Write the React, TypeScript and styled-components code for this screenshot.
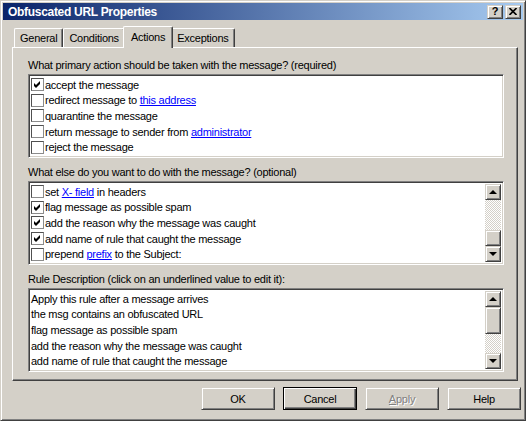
import React from "react";
import styled, { createGlobalStyle, css } from "styled-components";

const GlobalStyle = createGlobalStyle`
  html, body {
    margin: 0;
    padding: 0;
    background: #d4d0c8;
    overflow: hidden;
  }
  body {
    font-family: "Liberation Sans", Arial, sans-serif;
    font-size: 11px;
    letter-spacing: -0.25px;
    color: #000;
  }
`;

const raised = css`
  border: 1px solid;
  border-color: #d4d0c8 #404040 #404040 #d4d0c8;
  box-shadow: inset 1px 1px #fff, inset -1px -1px #808080;
`;

const sunken = css`
  border: 1px solid;
  border-color: #808080 #fff #fff #808080;
  box-shadow: inset 1px 1px #404040, inset -1px -1px #d4d0c8;
`;

const Window = styled.div`
  box-sizing: border-box;
  width: 526px;
  height: 421px;
  padding: 2px;
  background: #d4d0c8;
  ${raised};
  display: flex;
  flex-direction: column;
`;

const TitleBar = styled.div`
  height: 17px;
  display: flex;
  align-items: center;
  padding: 0 2px 0 5px;
  background: linear-gradient(to right, #0a246a, #a6caf0);
`;

const TitleText = styled.div`
  flex: 1;
  color: #fff;
  font-weight: bold;
  font-size: 12px;
  letter-spacing: -0.3px;
  white-space: nowrap;
`;

const CaptionButton = styled.div<{ $gap?: boolean }>`
  box-sizing: border-box;
  width: 16px;
  height: 14px;
  margin-left: ${(p) => (p.$gap ? 2 : 0)}px;
  background: #d4d0c8;
  ${raised};
  display: flex;
  align-items: center;
  justify-content: center;
  font-weight: bold;
  font-size: 11px;
  letter-spacing: 0;
  line-height: 1;
`;

const TabStrip = styled.div`
  display: flex;
  align-items: flex-end;
  height: 21px;
  margin: 6px 0 0 11px;
`;

const Tab = styled.div<{ $active?: boolean }>`
  box-sizing: border-box;
  height: ${(p) => (p.$active ? 22 : 19)}px;
  padding: 0 5px;
  display: flex;
  align-items: center;
  border-top: 1px solid #fff;
  border-left: 1px solid #fff;
  border-right: 1px solid #404040;
  border-radius: 2px 2px 0 0;
  box-shadow: inset -1px 0 #808080;
  background: #d4d0c8;
  white-space: nowrap;
  position: relative;
  ${(p) =>
    p.$active &&
    css`
      margin: 0 -2px -1px -2px;
      padding: 0 7px 2px 7px;
      z-index: 1;
    `}
`;

const Panel = styled.div`
  box-sizing: border-box;
  height: 334px;
  margin: 0 5px 0 9px;
  padding: 10px 13px 0 15px;
  border: 1px solid;
  border-color: #fff #404040 #404040 #fff;
  box-shadow: inset -1px -1px #808080;
  display: flex;
  flex-direction: column;
  gap: 7px;
`;

const Section = styled.div`
  display: flex;
  flex-direction: column;
`;

const SectionLabel = styled.div`
  height: 14px;
  line-height: 14px;
  margin-bottom: 2px;
  white-space: nowrap;
`;

const ListBox = styled.div`
  box-sizing: border-box;
  height: 84px;
  background: #fff;
  ${sunken};
  padding: 2px;
  display: flex;
`;

const Rows = styled.div`
  flex: 1;
  display: flex;
  flex-direction: column;
`;

const Row = styled.div`
  height: 16px;
  display: flex;
  align-items: center;
  white-space: nowrap;
`;

const Box = styled.div`
  box-sizing: border-box;
  width: 13px;
  height: 13px;
  margin-right: 1px;
  border: 1px solid #8c8c8c;
  border-top-color: #505050;
  border-left-color: #505050;
  background: #fff;
  display: flex;
  align-items: center;
  justify-content: center;
`;

const Link = styled.span`
  color: #0000ff;
  text-decoration: underline;
`;

const ScrollBar = styled.div`
  width: 16px;
  display: flex;
  flex-direction: column;
`;

const ScrollButton = styled.div`
  box-sizing: border-box;
  width: 16px;
  height: 16px;
  background: #d4d0c8;
  ${raised};
  display: flex;
  align-items: center;
  justify-content: center;
`;

const Arrow = styled.div<{ $down?: boolean }>`
  width: 0;
  height: 0;
  border-left: 4px solid transparent;
  border-right: 4px solid transparent;
  ${(p) =>
    p.$down
      ? css`
          border-top: 4px solid #000;
        `
      : css`
          border-bottom: 4px solid #000;
        `}
`;

const Track = styled.div`
  flex: 1;
  background-color: #fff;
  background-image: repeating-conic-gradient(#d4d0c8 0 25%, #fff 0 50%);
  background-size: 2px 2px;
`;

const Thumb = styled.div<{ $h: number }>`
  box-sizing: border-box;
  height: ${(p) => p.$h}px;
  background: #d4d0c8;
  ${raised};
`;

const ButtonRow = styled.div`
  display: flex;
  justify-content: flex-end;
  gap: 8px;
  margin-top: 6px;
  padding-right: 2px;
`;

const Button = styled.div<{ $default?: boolean; $disabled?: boolean }>`
  box-sizing: border-box;
  width: 74px;
  height: 23px;
  background: #d4d0c8;
  display: flex;
  align-items: center;
  justify-content: center;
  ${(p) =>
    p.$default
      ? css`
          border: 1px solid #000;
          box-shadow: inset 1px 1px #fff, inset -1px -1px #404040,
            inset -2px -2px #808080;
        `
      : raised}
  ${(p) =>
    p.$disabled &&
    css`
      color: #808080;
      text-shadow: 1px 1px #fff;
    `}
`;

const Check = () => (
  <svg width="7" height="7" viewBox="0 0 7 7">
    <path d="M0 2 L2 4 L6 0 L6 3 L2 7 L0 5 Z" fill="#000" />
  </svg>
);

const CheckRow = ({ on, children }: { on?: boolean; children: React.ReactNode }) => (
  <Row>
    <Box>{on && <Check />}</Box>
    <span>{children}</span>
  </Row>
);

const Scroller = ({ thumb, thumbAtEnd }: { thumb: number; thumbAtEnd?: boolean }) => (
  <ScrollBar>
    <ScrollButton>
      <Arrow />
    </ScrollButton>
    {!thumbAtEnd && <Thumb $h={thumb} />}
    <Track />
    {thumbAtEnd && <Thumb $h={thumb} />}
    <ScrollButton>
      <Arrow $down />
    </ScrollButton>
  </ScrollBar>
);

export default function App() {
  return (
    <>
      <GlobalStyle />
      <Window>
        <TitleBar>
          <TitleText>Obfuscated URL Properties</TitleText>
          <CaptionButton>?</CaptionButton>
          <CaptionButton $gap>
            <svg width="8" height="7" viewBox="0 0 8 7">
              <path d="M0.5 0 L7.5 7 M7.5 0 L0.5 7" stroke="#000" strokeWidth="1.6" />
            </svg>
          </CaptionButton>
        </TitleBar>

        <TabStrip>
          <Tab>General</Tab>
          <Tab>Conditions</Tab>
          <Tab $active>Actions</Tab>
          <Tab>Exceptions</Tab>
        </TabStrip>

        <Panel>
          <Section>
            <SectionLabel>What primary action should be taken with the message? (required)</SectionLabel>
            <ListBox>
              <Rows>
                <CheckRow on>accept the message</CheckRow>
                <CheckRow>
                  redirect message to <Link>this address</Link>
                </CheckRow>
                <CheckRow>quarantine the message</CheckRow>
                <CheckRow>
                  return message to sender from <Link>administrator</Link>
                </CheckRow>
                <CheckRow>reject the message</CheckRow>
              </Rows>
            </ListBox>
          </Section>

          <Section>
            <SectionLabel>What else do you want to do with the message? (optional)</SectionLabel>
            <ListBox>
              <Rows>
                <CheckRow>
                  set <Link>X- field</Link> in headers
                </CheckRow>
                <CheckRow on>flag message as possible spam</CheckRow>
                <CheckRow on>add the reason why the message was caught</CheckRow>
                <CheckRow on>add name of rule that caught the message</CheckRow>
                <CheckRow>
                  prepend <Link>prefix</Link> to the Subject:
                </CheckRow>
              </Rows>
              <Scroller thumb={16} thumbAtEnd />
            </ListBox>
          </Section>

          <Section>
            <SectionLabel>Rule Description (click on an underlined value to edit it):</SectionLabel>
            <ListBox>
              <Rows>
                <Row>Apply this rule after a message arrives</Row>
                <Row>the msg contains an obfuscated URL</Row>
                <Row>flag message as possible spam</Row>
                <Row>add the reason why the message was caught</Row>
                <Row>add name of rule that caught the message</Row>
              </Rows>
              <Scroller thumb={27} />
            </ListBox>
          </Section>
        </Panel>

        <ButtonRow>
          <Button>OK</Button>
          <Button $default>Cancel</Button>
          <Button $disabled>
            <span>
              <u>A</u>pply
            </span>
          </Button>
          <Button>Help</Button>
        </ButtonRow>
      </Window>
    </>
  );
}
